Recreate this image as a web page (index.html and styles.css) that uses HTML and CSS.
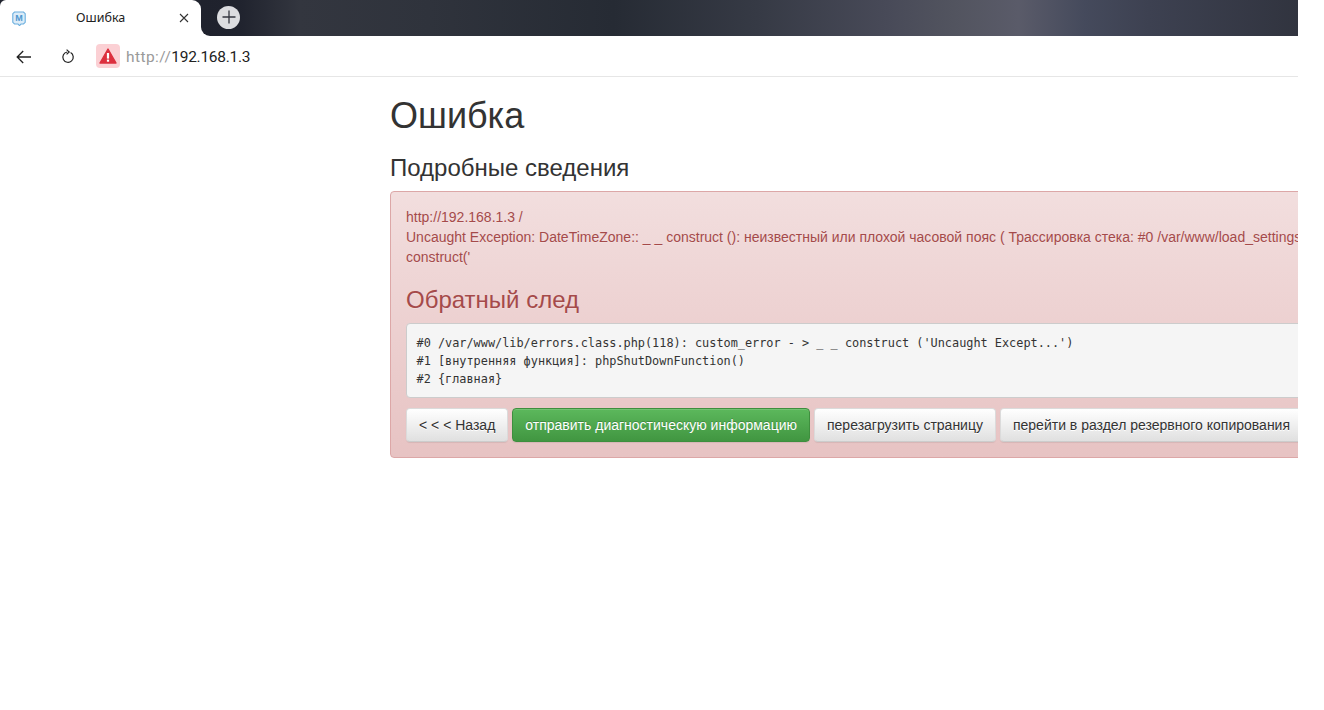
FILE: index.html
```html
<!DOCTYPE html>
<html lang="ru">
<head>
<meta charset="utf-8">
<title>Ошибка</title>
<link rel="stylesheet" href="styles.css">
</head>
<body>
<div class="window">
  <header class="titlebar">
    <div class="tab">
      <span class="favicon">
        <svg width="14" height="15" viewBox="0 0 14 15"><path d="M2.5 1h9L13.2 2.7v8.6L11.5 13H9l-1.5 1.6L6 13H2.5L.8 11.3V2.7z" fill="#dcecf8" stroke="#6aaede" stroke-width="1.1"/></svg>
        <span class="favicon-letter">M</span>
      </span>
      <span class="tab-title">Ошибка</span>
      <svg class="tab-close" width="10" height="10" viewBox="0 0 10 10"><path d="M1 1l8 8M9 1l-8 8" stroke="#333" stroke-width="1.1" fill="none"/></svg>
    </div>
    <div class="strip">
      <span class="newtab">
        <svg width="14" height="14" viewBox="0 0 14 14"><path d="M7 0.5v13M0.5 7h13" stroke="#33363f" stroke-width="1.3" fill="none"/></svg>
      </span>
    </div>
  </header>
  <nav class="addressbar">
    <svg class="nav-back" width="16" height="14" viewBox="0 0 16 14"><path d="M15 7H1.5M7.2 1L1.2 7l6 6" stroke="#222" stroke-width="1.3" fill="none"/></svg>
    <svg class="nav-reload" width="14" height="16" viewBox="0 0 14 16"><path d="M9.6 3.6a5.2 5.2 0 1 1-3.4-.6" stroke="#222" stroke-width="1.2" fill="none"/><path d="M5.6 0.6l2.6 2.4-2.6 2.4" stroke="#222" stroke-width="1.2" fill="none"/></svg>
    <span class="warn">
      <svg width="18" height="16" viewBox="0 0 18 16"><path d="M9 1L17 15H1z" fill="#dc2f3e" stroke="#dc2f3e" stroke-width="1.4" stroke-linejoin="round"/><rect x="7.9" y="5" width="2.2" height="5.6" fill="#fff"/><rect x="7.9" y="11.6" width="2.2" height="2.1" fill="#fff"/></svg>
    </span>
    <span class="url"><span class="url-scheme">http://</span><span class="url-host">192.168.1.3</span></span>
  </nav>
  <main class="page">
    <h1 class="page-title">Ошибка</h1>
    <h3 class="subtitle">Подробные сведения</h3>
    <section class="alert">
      <div class="message">http://192.168.1.3 /<br>Uncaught Exception: DateTimeZone:: _ _ construct (): неизвестный или плохой часовой пояс ( Трассировка стека: #0 /var/www/load_settings<br>construct('</div>
      <h3 class="trace-title">Обратный след</h3>
      <pre class="trace">#0 /var/www/lib/errors.class.php(118): custom_error - &gt; _ _ construct ('Uncaught Except...')
#1 [внутренняя функция]: phpShutDownFunction()
#2 {главная}</pre>
      <div class="actions">
        <button class="btn">&lt; &lt; &lt; Назад</button>
        <button class="btn btn-success">отправить диагностическую информацию</button>
        <button class="btn">перезагрузить страницу</button>
        <button class="btn">перейти в раздел резервного копирования</button>
      </div>
    </section>
  </main>
</div>
</body>
</html>
```
FILE: styles.css
```css
* { box-sizing: border-box; }
html, body { margin: 0; height: 100%; background: #fff; }
body { overflow: hidden; font-family: "Liberation Sans", Arial, sans-serif; }
.window { width: 1298px; height: 100%; overflow: hidden; }

.titlebar { display: flex; height: 36px; background: linear-gradient(#20232e 50%, #fff 50%); }
.tab { width: 201px; display: flex; align-items: center; background: #fff; border-radius: 6px 9px 0 0; padding-left: 12px; position: relative; }
.favicon { width: 14px; height: 15px; position: relative; display: block; }
.favicon svg { display: block; }
.favicon-letter { position: absolute; left: 0; right: 0; top: 2px; text-align: center; font: bold 9px/10px "Liberation Sans", sans-serif; color: #4f97cf; }
.tab-title { margin-left: 50px; font: 12.5px/16px "Noto Sans", sans-serif; color: #222; }
.tab-close { position: absolute; left: 179px; top: 13px; }
.strip { flex: 1; display: flex; align-items: center; padding-left: 16px; border-bottom-left-radius: 9px;
  background: linear-gradient(90deg, #1f222d 0, #20232e 3.6%, #33363f 9%, #2f333c 20.9%, #262b34 37.6%, #363a45 50.7%, #484a58 62.6%, #52545f 68.6%, #5a5b69 74.5%, #454a5c 80.5%, #3d4151 86.4%, #31343f 100%); }
.newtab { width: 23px; height: 23px; margin-top: -2px; border-radius: 50%; background: #dcdde0; display: flex; align-items: center; justify-content: center; }
.newtab svg { display: block; }

.addressbar { height: 41px; display: flex; align-items: center; padding: 2px 0 0 16px; background: #fff; border-bottom: 1px solid #e6e6e6; }
.nav-back { flex: none; }
.nav-reload { flex: none; margin-left: 29px; }
.warn { flex: none; width: 24px; height: 24px; margin: -2px 0 0 21px; border-radius: 4px; background: #fbd0d4; display: flex; align-items: center; justify-content: center; }
.url { margin-left: 6px; font: 15.5px/20px Roboto, sans-serif; color: #222; white-space: nowrap; }
.url-scheme { color: #9a9a9a; letter-spacing: .43px; }
.url-host { letter-spacing: -.27px; }

.page { padding: 19px 0 0 390px; color: #333; }
.page-title { margin: 0 0 19px; font-size: 36px; font-weight: 500; line-height: 39.6px; }
.subtitle { margin: 0 0 10px; font-size: 24px; font-weight: 500; line-height: 26.4px; }

.alert { width: 1000px; padding: 15px; border: 1px solid #dca7a7; border-radius: 4px; color: #a54a4a; background: linear-gradient(#f2dede, #e7c3c3); text-shadow: 0 1px 0 rgba(255,255,255,.2); }
.message { font-size: 14px; line-height: 20px; white-space: nowrap; }
.trace-title { margin: 20px 0 10px; font-size: 24px; font-weight: 500; line-height: 26.4px; }
.trace { margin: 0 0 10px; padding: 9.5px; height: 75px; border: 1px solid #ccc; border-radius: 4px; background: #f5f5f5; color: #333; text-shadow: none; font: 11.86px/18px "DejaVu Sans Mono", monospace; }
.actions { display: flex; gap: 4px; white-space: nowrap; }
.btn { flex: none; height: 34px; padding: 6px 12px; border: 1px solid #ccc; border-color: #dbdbdb #dbdbdb #ccc; border-radius: 4px; font: 14px/20px "Liberation Sans", sans-serif; color: #333; text-shadow: 0 1px 0 #fff; background: linear-gradient(#fff, #e0e0e0); box-shadow: inset 0 1px 0 rgba(255,255,255,.15), 0 1px 1px rgba(0,0,0,.075); }
.btn-success { color: #fff; text-shadow: 0 -1px 0 rgba(0,0,0,.2); border-color: #3e8f3e; background: linear-gradient(#5cb85c, #419641); }
```
